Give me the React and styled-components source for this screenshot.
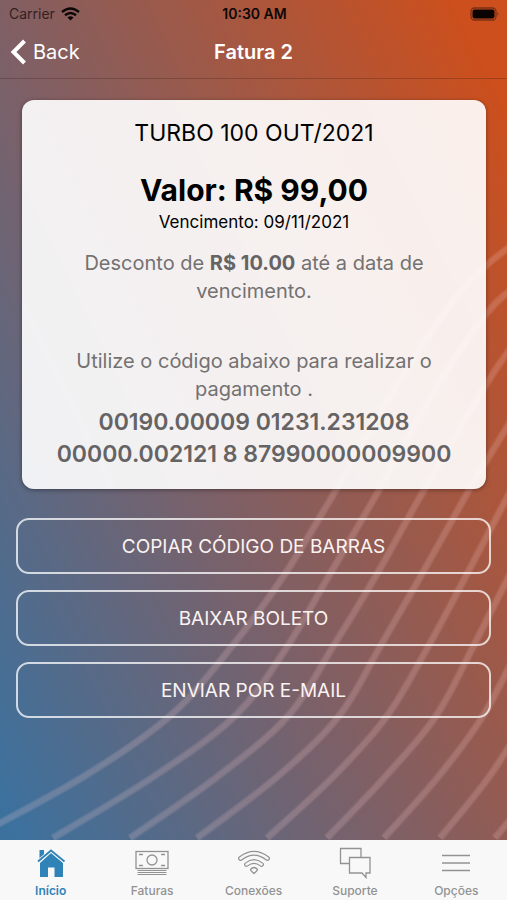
import React from 'react';

import styled, { createGlobalStyle } from 'styled-components';

const GlobalStyle = createGlobalStyle`
  * {
    box-sizing: border-box;
  }

  body {
    margin: 0;
    font-family: Inter, 'Liberation Sans', sans-serif;
  }

  p, h1, h2 {
    margin: 0;
  }
`;

const Screen = styled.div`
  display: flex;
  flex-direction: column;
  min-height: 100vh;
`;

const Page = styled.div`
  position: relative;
  flex: 1;
  display: flex;
  flex-direction: column;
  background: linear-gradient(64deg, #3c719e 2%, #7d6067 42%, #cc4f1d 94%);
`;

const Waves = styled.svg`
  position: absolute;
  top: 0;
  left: 0;
  width: 100%;
  height: 100%;
  fill: none;
  stroke: #ffd2d2;
  stroke-opacity: 0.11;
`;

const StatusBar = styled.div`
  position: relative;
  display: grid;
  grid-template-columns: 1fr auto 1fr;
  align-items: center;
  height: 27px;
  padding: 0 7px 0 9px;
  font-size: 14px;
  color: #0d0707;
`;

const Carrier = styled.span`
  display: flex;
  align-items: center;
  gap: 6px;
  color: #33211f;
`;

const Clock = styled.span`
  font-weight: 600;
`;

const BatteryIcon = styled.svg`
  justify-self: end;
`;

const NavBar = styled.header`
  position: relative;
  display: grid;
  grid-template-columns: 1fr auto 1fr;
  align-items: center;
  height: 52px;
  padding: 0 10px 2px;
  border-bottom: 1px solid rgba(60, 30, 20, 0.3);
  color: white;
`;

const BackButton = styled.button`
  display: flex;
  align-items: center;
  justify-self: start;
  gap: 6px;
  padding: 0;
  border: 0;
  background: none;
  color: inherit;
  font: inherit;
  font-size: 20px;
`;

const Title = styled.h1`
  font-size: 20px;
  font-weight: 600;
`;

const Card = styled.main`
  position: relative;
  margin: 21px 21px 0 22px;
  padding: 15px 32px 19px;
  border-radius: 12px;
  background: rgba(255, 255, 255, 0.91);
  box-shadow: 0 1px 4px rgba(0, 0, 0, 0.4);
  text-align: center;
`;

const Plan = styled.h2`
  font-size: 23px;
  font-weight: 400;
  line-height: 36px;
`;

const Amount = styled.p`
  margin-top: 19px;
  font-size: 30px;
  font-weight: 700;
  line-height: 40px;
`;

const DueDate = styled.p`
  font-size: 17px;
  line-height: 24px;
`;

const Note = styled.p`
  margin-top: ${({ $gap }) => $gap};
  font-size: 20px;
  line-height: 28px;
  color: #737171;

  strong {
    font-weight: 700;
    color: #656363;
  }
`;

const Barcode = styled.p`
  margin: 3px -20px 0;
  font-size: 23px;
  font-weight: 600;
  line-height: 32px;
  color: #656363;
`;

const Actions = styled.div`
  position: relative;
  display: flex;
  flex-direction: column;
  gap: 16px;
  padding: 29px 16px 32px;
`;

const ActionButton = styled.button`
  height: 56px;
  border: 2px solid rgba(255, 255, 255, 0.75);
  border-radius: 13px;
  background: none;
  color: #fbf3f2;
  font: inherit;
  font-size: 19px;
`;

const TabBar = styled.nav`
  display: flex;
  height: 60px;
  background: #f8f8f8;
`;

const Tab = styled.a`
  flex: 1;
  display: flex;
  flex-direction: column;
  align-items: center;
  gap: 4px;
  padding-top: 7px;
  font-size: 12px;
  font-weight: ${({ $active }) => ($active ? 600 : 500)};
  line-height: 16px;
  text-decoration: none;
  color: ${({ $active }) => ($active ? '#2f83b7' : '#929292')};
`;

const TabIcon = styled.svg`
  width: 40px;
  height: 32px;
  fill: none;
  stroke: currentColor;
  stroke-width: 1.3;
`;

const waves = [
  [[-28, 838], [83, 777], [170, 716], [233, 645], [285, 574], [336, 490], [400, 380], [450, 305], [487, 265], [515, 243]],
  [[53, 838], [153, 777], [235, 716], [285, 650], [330, 574], [379, 490], [435, 390], [487, 313], [515, 287]],
  [[130, 838], [217, 777], [288, 716], [334, 645], [377, 574], [424, 490], [487, 383], [515, 342]],
  [[197, 838], [277, 777], [339, 716], [381, 645], [422, 574], [469, 490], [487, 460], [515, 414]],
  [[267, 838], [333, 777], [387, 716], [429, 645], [467, 574], [512, 488]],
  [[327, 838], [385, 777], [436, 716], [474, 645], [510, 574]],
  [[384, 838], [438, 777], [483, 716], [520, 645]],
  [[440, 838], [489, 777], [528, 716]],
  [[495, 838], [540, 784]],
];

// smooth curve through every point (Catmull-Rom)
const toPath = (points) =>
  points.slice(1).reduce((d, [x, y], i) => {
    const [x0, y0] = points[i - 1] || points[i];
    const [x1, y1] = points[i];
    const [x3, y3] = points[i + 2] || [x, y];
    return `${d}C${x1 + (x - x0) / 6} ${y1 + (y - y0) / 6} ${x - (x3 - x1) / 6} ${y - (y3 - y1) / 6} ${x} ${y}`;
  }, `M${points[0].join(' ')}`);

const icons = {
  home: (
    <g fill="currentColor" stroke="none">
      <path d="M8.500 3h4.500v5l-4.500 4z" />
      <path d="M20 6 32 16V30H23.500V20.500H17V30H9V16Z" />
      <path d="M7 14.500 20 3.500 33.500 14.500" fill="none" stroke="#f8f8f8" strokeWidth="3.500" />
      <path d="M7 14.500 20 3.500 33.500 14.500" fill="none" stroke="currentColor" strokeWidth="1.800" />
    </g>
  ),
  bills: (
    <>
      <rect x="4" y="4.500" width="32" height="17" />
      <circle cx="20" cy="13" r="5" />
      <path d="M7 7.500h4M29 7.500h4M7 18.500h4M29 18.500h4" />
      <path d="M5.500 23.500h29M5.500 25.500h29M5.500 27.500h29" strokeWidth="1" />
    </>
  ),
  wifi: (
    <g strokeLinecap="round">
      <path d="M6.500 11.500Q20 1 33.500 11.500M12.500 17.500Q20 11.500 27.500 17.500" strokeWidth="4.800" />
      <path d="M6.500 11.500Q20 1 33.500 11.500M12.500 17.500Q20 11.500 27.500 17.500" strokeWidth="2.400" stroke="#f8f8f8" />
      <path d="M16.500 22.500Q20 18.500 23.500 22.500Q23.500 23.500 20 26.500Q16.500 23.500 16.500 22.500Z" />
    </g>
  ),
  support: (
    <>
      <path d="M14 16.500H5.500V1.500H26V10" />
      <path d="M14.500 10.500H35V26H31V30.500L27 26H14.500Z" />
    </>
  ),
  options: <path d="M6 8.500h28M6 16h28M6 23.500h28" />,
};

const tabs = [
  { icon: 'home', label: 'Início' },
  { icon: 'bills', label: 'Faturas' },
  { icon: 'wifi', label: 'Conexões' },
  { icon: 'support', label: 'Suporte' },
  { icon: 'options', label: 'Opções' },
];

const App = () => {
  return (
    <Screen>
      <GlobalStyle />
      <Page>
        <Waves viewBox="0 0 507 840" preserveAspectRatio="none" aria-hidden="true">
          {waves.map((points, i) => (
            <g key={i}>
              <path d={toPath(points)} strokeWidth="8" />
              <path d={toPath(points)} strokeWidth="5" />
            </g>
          ))}
        </Waves>
        <StatusBar>
          <Carrier>
            Carrier
            <svg width="19" height="14" viewBox="0 0 19 14" fill="none" stroke="#0d0707" strokeWidth="2.400" aria-hidden="true">
              <path d="M1 5Q9.500 -2 18 5M4 8.300Q9.500 3.800 15 8.300" />
              <path d="M6.500 10.500Q9.500 8 12.500 10.500L9.500 13.500Z" fill="#0d0707" stroke="none" />
            </svg>
          </Carrier>
          <Clock>10:30 AM</Clock>
          <BatteryIcon width="30" height="14" viewBox="0 0 30 14" aria-hidden="true">
            <rect x="1" y="1" width="25" height="12" rx="3.500" fill="none" stroke="#7a3015" strokeWidth="1.300" />
            <rect x="2.500" y="2.500" width="22" height="9" rx="2" fill="#0a0301" />
            <path d="M27.500 5q2 2 0 4z" fill="#7a3015" />
          </BatteryIcon>
        </StatusBar>
        <NavBar>
          <BackButton type="button">
            <svg width="17" height="26" viewBox="0 0 17 26" fill="none" stroke="white" strokeWidth="4" aria-hidden="true">
              <path d="M14.500 2 3.500 13 14.500 24" />
            </svg>
            Back
          </BackButton>
          <Title>Fatura 2</Title>
        </NavBar>
        <Card>
          <Plan>TURBO 100 OUT/2021</Plan>
          <Amount>Valor: R$ 99,00</Amount>
          <DueDate>Vencimento: 09/11/2021</DueDate>
          <Note $gap="15px">
            Desconto de <strong>R$ 10.00</strong> até a data de vencimento.
          </Note>
          <Note $gap="42px">Utilize o código abaixo para realizar o pagamento .</Note>
          <Barcode>00190.00009 01231.231208 00000.002121 8 87990000009900</Barcode>
        </Card>
        <Actions>
          <ActionButton type="button">COPIAR CÓDIGO DE BARRAS</ActionButton>
          <ActionButton type="button">BAIXAR BOLETO</ActionButton>
          <ActionButton type="button">ENVIAR POR E-MAIL</ActionButton>
        </Actions>
      </Page>
      <TabBar>
        {tabs.map(({ icon, label }, i) => (
          <Tab key={label} href={`#${icon}`} $active={i === 0}>
            <TabIcon viewBox="0 0 40 32" aria-hidden="true">{icons[icon]}</TabIcon>
            {label}
          </Tab>
        ))}
      </TabBar>
    </Screen>
  );
};

export default App;
